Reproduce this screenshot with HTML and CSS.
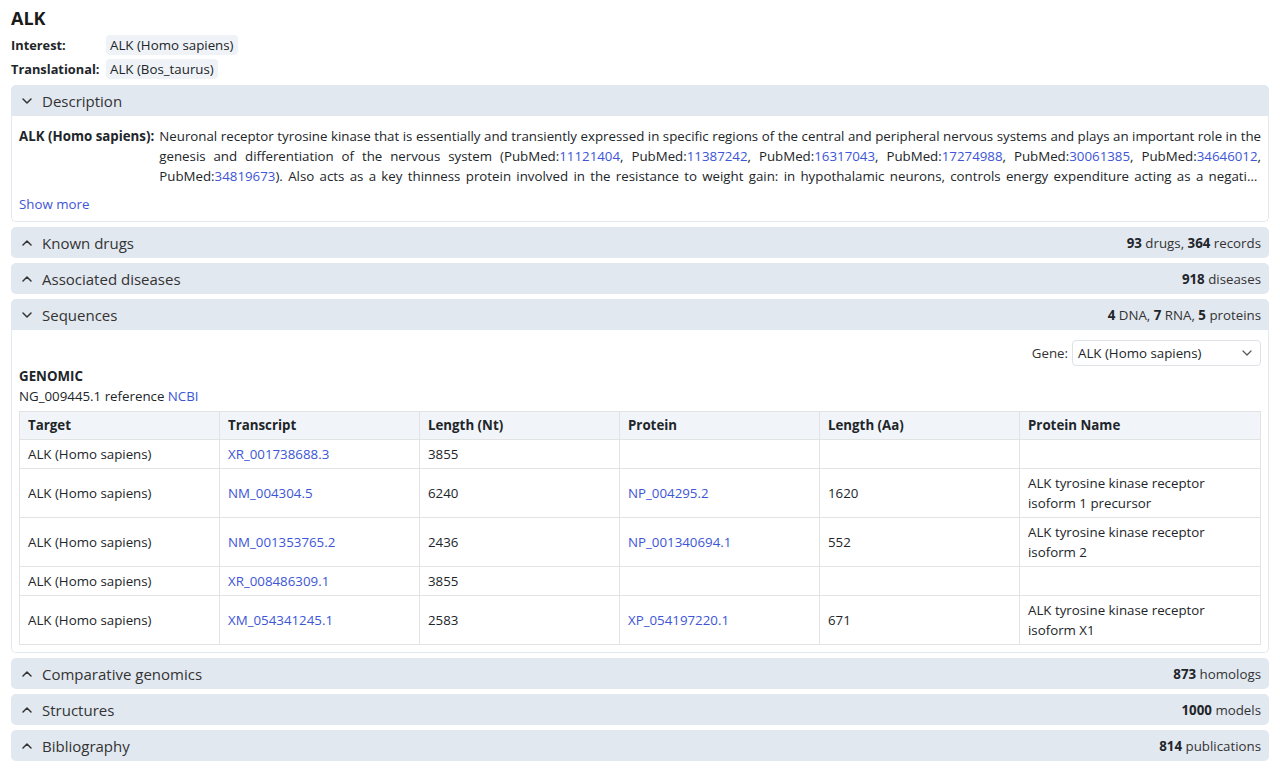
FILE: index.html
```html
<!DOCTYPE html>
<html lang="en">
<head>
<meta charset="utf-8">
<title>ALK</title>
<link rel="stylesheet" href="styles.css">
</head>
<body>
<div class="page">
  <h1 class="title">ALK</h1>
  <div class="meta">
    <div class="meta-row"><span class="meta-label">Interest:</span><span class="chip">ALK (Homo sapiens)</span></div>
    <div class="meta-row"><span class="meta-label">Translational:</span><span class="chip">ALK (Bos_taurus)</span></div>
  </div>

  <section class="panel open">
    <div class="panel-head">
      <span class="head-left"><svg class="chev" viewBox="0 0 10 6" width="10" height="6"><polyline points="1,1 5,5 9,1"/></svg>Description</span>
    </div>
    <div class="panel-body desc-body">
      <div class="desc-row">
        <span class="desc-label">ALK (Homo sapiens):</span>
        <p class="desc-text">Neuronal receptor tyrosine kinase that is essentially and transiently expressed in specific regions of the central and peripheral nervous systems and plays an important role in the genesis and differentiation of the nervous system (PubMed:<a href="#">11121404</a>, PubMed:<a href="#">11387242</a>, PubMed:<a href="#">16317043</a>, PubMed:<a href="#">17274988</a>, PubMed:<a href="#">30061385</a>, PubMed:<a href="#">34646012</a>, PubMed:<a href="#">34819673</a>). Also acts as a key thinness protein involved in the resistance to weight gain: in hypothalamic neurons, controls energy expenditure acting as a negative regulator.</p>
      </div>
      <a href="#" class="show-more">Show more</a>
    </div>
  </section>

  <section class="panel">
    <div class="panel-head">
      <span class="head-left"><svg class="chev" viewBox="0 0 10 6" width="10" height="6"><polyline points="1,5 5,1 9,5"/></svg>Known drugs</span>
      <span class="head-right"><b>93</b> drugs, <b>364</b> records</span>
    </div>
  </section>

  <section class="panel">
    <div class="panel-head">
      <span class="head-left"><svg class="chev" viewBox="0 0 10 6" width="10" height="6"><polyline points="1,5 5,1 9,5"/></svg>Associated diseases</span>
      <span class="head-right"><b>918</b> diseases</span>
    </div>
  </section>

  <section class="panel open">
    <div class="panel-head">
      <span class="head-left"><svg class="chev" viewBox="0 0 10 6" width="10" height="6"><polyline points="1,1 5,5 9,1"/></svg>Sequences</span>
      <span class="head-right"><b>4</b> DNA, <b>7</b> RNA, <b>5</b> proteins</span>
    </div>
    <div class="panel-body seq-body">
      <div class="gene-row">
        <label class="gene-label">Gene:</label>
        <div class="select"><span>ALK (Homo sapiens)</span><svg class="sel-chev" viewBox="0 0 10 6" width="10" height="6"><polyline points="1,1 5,5 9,1"/></svg></div>
      </div>
      <div class="genomic">GENOMIC</div>
      <div class="ref">NG_009445.1 reference <a href="#">NCBI</a></div>
      <table class="seq-table">
        <colgroup><col class="c"><col class="c"><col class="c"><col class="c"><col class="c"><col></colgroup>
        <thead>
          <tr><th>Target</th><th>Transcript</th><th>Length (Nt)</th><th>Protein</th><th>Length (Aa)</th><th>Protein Name</th></tr>
        </thead>
        <tbody>
          <tr><td>ALK (Homo sapiens)</td><td><a href="#">XR_001738688.3</a></td><td>3855</td><td></td><td></td><td></td></tr>
          <tr><td>ALK (Homo sapiens)</td><td><a href="#">NM_004304.5</a></td><td>6240</td><td><a href="#">NP_004295.2</a></td><td>1620</td><td>ALK tyrosine kinase receptor isoform 1 precursor</td></tr>
          <tr><td>ALK (Homo sapiens)</td><td><a href="#">NM_001353765.2</a></td><td>2436</td><td><a href="#">NP_001340694.1</a></td><td>552</td><td>ALK tyrosine kinase receptor isoform 2</td></tr>
          <tr><td>ALK (Homo sapiens)</td><td><a href="#">XR_008486309.1</a></td><td>3855</td><td></td><td></td><td></td></tr>
          <tr><td>ALK (Homo sapiens)</td><td><a href="#">XM_054341245.1</a></td><td>2583</td><td><a href="#">XP_054197220.1</a></td><td>671</td><td>ALK tyrosine kinase receptor isoform X1</td></tr>
        </tbody>
      </table>
    </div>
  </section>

  <section class="panel">
    <div class="panel-head">
      <span class="head-left"><svg class="chev" viewBox="0 0 10 6" width="10" height="6"><polyline points="1,5 5,1 9,5"/></svg>Comparative genomics</span>
      <span class="head-right"><b>873</b> homologs</span>
    </div>
  </section>

  <section class="panel">
    <div class="panel-head">
      <span class="head-left"><svg class="chev" viewBox="0 0 10 6" width="10" height="6"><polyline points="1,5 5,1 9,5"/></svg>Structures</span>
      <span class="head-right"><b>1000</b> models</span>
    </div>
  </section>

  <section class="panel">
    <div class="panel-head">
      <span class="head-left"><svg class="chev" viewBox="0 0 10 6" width="10" height="6"><polyline points="1,5 5,1 9,5"/></svg>Bibliography</span>
      <span class="head-right"><b>814</b> publications</span>
    </div>
  </section>
</div>
</body>
</html>
```
FILE: styles.css
```css
* { box-sizing: border-box; }
body {
  margin: 0;
  font-family: "Open Sans", "Noto Sans", sans-serif;
  font-size: 13.3px;
  line-height: 20px;
  color: #212529;
  background: #fff;
}
a { color: #3d55d6; text-decoration: none; }
.page { padding: 7px 11px 0 11px; }
.title {
  margin: 0;
  font-size: 18px;
  line-height: 22px;
  font-weight: 700;
  color: #1a1a1a;
}
.meta { margin-top: 6px; display: flex; flex-direction: column; gap: 4px; }
.meta-row { display: flex; align-items: center; }
.meta-label { width: 95px; font-weight: 700; font-size: 12.8px; }
.chip {
  background: #eff3f8;
  border-radius: 4px;
  padding: 0 4px;
  line-height: 20px;
}
.panel { margin-top: 5px; }
.meta + .panel { margin-top: 6px; }
.panel-head {
  display: flex;
  justify-content: space-between;
  align-items: center;
  height: 31px;
  background: #e2e8f0;
  border-radius: 5px;
  padding: 0 8px 0 11px;
}
.panel.open .panel-head { border-radius: 5px 5px 0 0; }
.head-left {
  display: flex;
  align-items: center;
  gap: 10px;
  font-size: 15px;
  color: #333;
}
.chev { fill: none; stroke: #333; stroke-width: 1.5; stroke-linecap: round; stroke-linejoin: round; }
.head-right { font-size: 13.3px; color: #333; }
.head-right b { font-weight: 700; color: #212529; }
.panel-body {
  border: 1px solid #e2e8f0;
  border-top: 0;
  border-radius: 0 0 5px 5px;
  padding: 8px 7px;
}
.desc-body { padding-top: 10px; padding-bottom: 7px; }
.desc-row { display: flex; gap: 5px; }
.desc-label { font-weight: 700; white-space: nowrap; }
.desc-text {
  margin: 0;
  text-align: justify;
  display: -webkit-box;
  -webkit-line-clamp: 3;
  -webkit-box-orient: vertical;
  overflow: hidden;
}
.show-more { display: inline-block; margin-top: 8px; }
.seq-body { padding-top: 10px; padding-bottom: 7px; }
.gene-row { display: flex; justify-content: flex-end; align-items: center; gap: 4px; }
.gene-label { color: #333; }
.select {
  width: 189px;
  height: 26px;
  border: 1px solid #dee2e6;
  border-radius: 4px;
  display: flex;
  align-items: center;
  justify-content: space-between;
  padding: 0 8px 0 5px;
}
.sel-chev { fill: none; stroke: #555; stroke-width: 1.2; stroke-linecap: round; stroke-linejoin: round; }
.genomic { font-weight: 700; margin-top: 0; }
.seq-table {
  margin-top: 5px;
  width: 100%;
  border-collapse: collapse;
  table-layout: fixed;
}
.seq-table col.c { width: 200px; }
.seq-table th, .seq-table td {
  border: 1px solid #e3e3e3;
  padding: 4px 14px 4px 8px;
  text-align: left;
  vertical-align: middle;
  line-height: 20px;
}
.seq-table th { background: #f1f5f9; font-weight: 700; padding-top: 3px; padding-bottom: 4px; }
```
